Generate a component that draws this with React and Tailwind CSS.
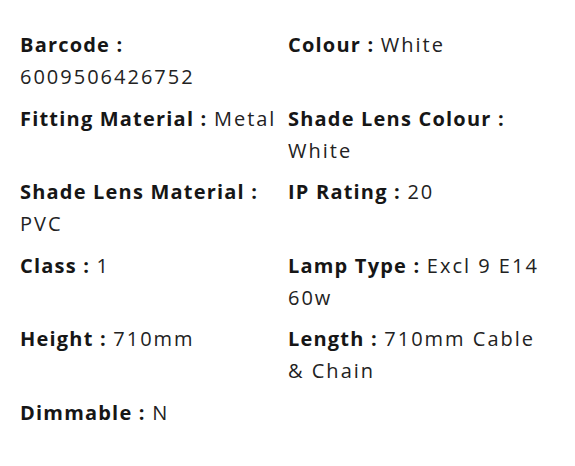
import React from 'react';

const specs = [
  { label: 'Barcode', value: '6009506426752' },
  { label: 'Colour', value: 'White' },
  { label: 'Fitting Material', value: 'Metal' },
  { label: 'Shade Lens Colour', value: 'White' },
  { label: 'Shade Lens Material', value: 'PVC' },
  { label: 'IP Rating', value: '20' },
  { label: 'Class', value: '1' },
  { label: 'Lamp Type', value: 'Excl 9 E14 60w' },
  { label: 'Height', value: '710mm' },
  { label: 'Length', value: '710mm Cable & Chain' },
  { label: 'Dimmable', value: 'N' },
];

const App = () => {
  return (
    <div
      className="min-h-[466px] bg-white pl-5 pr-5 pt-[29px] text-[#222222]"
      style={{ fontFamily: '"Open Sans", "Noto Sans", sans-serif' }}
    >
      <div className="grid grid-cols-[268px_260px] gap-y-[9.5px] text-[20px] leading-[32px]">
        {specs.map((s) => (
          <div key={s.label}>
            <span className="font-bold tracking-[0.06em] text-[#161616]">{s.label} : </span>
            <span className="tracking-[0.1em]">{s.value}</span>
          </div>
        ))}
      </div>
    </div>
  );
};

export default App;
